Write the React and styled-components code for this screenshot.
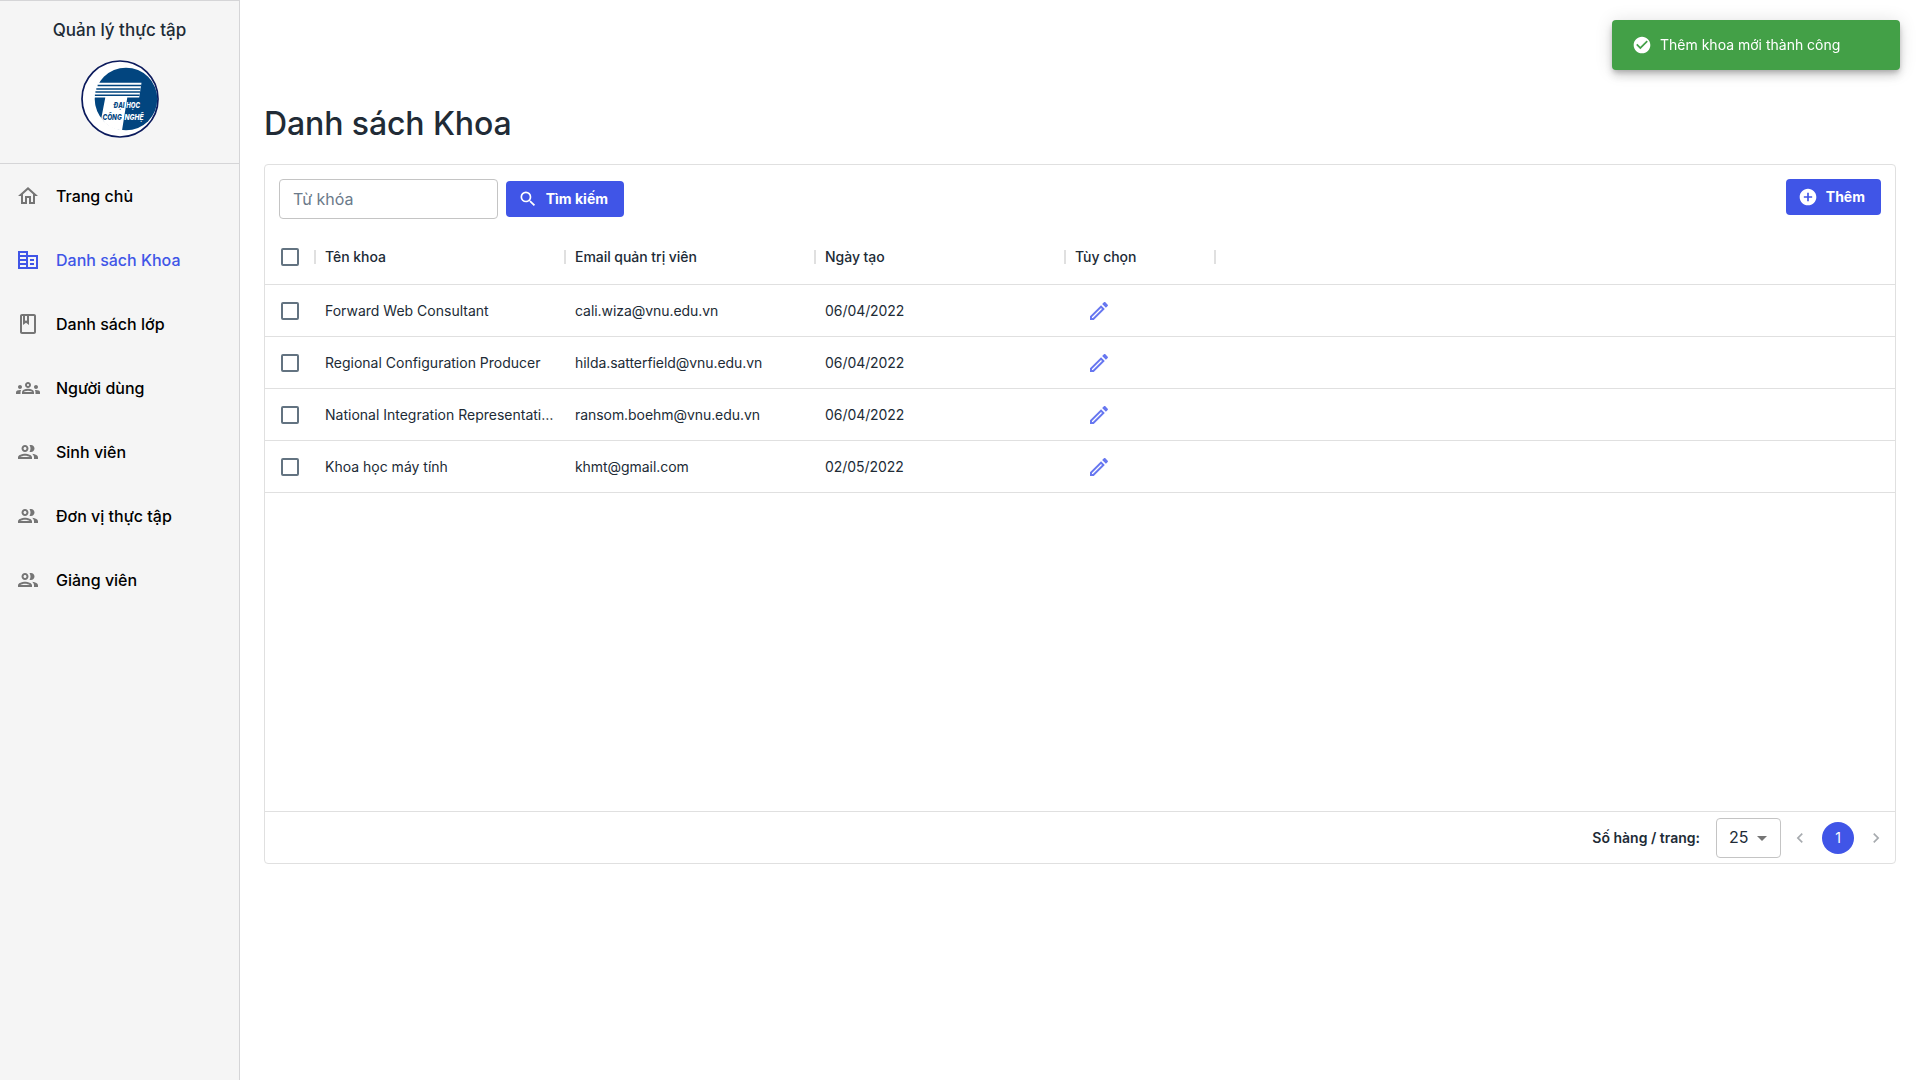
import React from "react";
import styled, { createGlobalStyle } from "styled-components";
import {
  MdOutlineHome,
  MdOutlineClass,
  MdOutlineGroups,
  MdSearch,
  MdAddCircle,
  MdArrowDropDown,
  MdNavigateBefore,
  MdNavigateNext,
  MdCheckCircle,
} from "react-icons/md";

const primary = "#4055e7";
const ink = "#212b36";
const line = "#e0e0e0";

const GlobalStyle = createGlobalStyle`
  *, *::before, *::after { box-sizing: border-box; }
  body {
    margin: 0;
    background: #fff;
    color: ${ink};
    font-family: Inter, "Noto Sans", sans-serif;
    font-size: 16px;
    line-height: 1.5;
  }
  button, input { font-family: inherit; }
`;

const Layout = styled.div`
  display: flex;
  min-height: 100vh;
`;

const Sidebar = styled.aside`
  flex: 0 0 240px;
  background: #f5f5f5;
  border-top: 1px solid #d5d5d7;
  border-right: 1px solid #d5d5d7;
`;

const Brand = styled.div`
  display: flex;
  flex-direction: column;
  align-items: center;
  height: 163px;
  padding-top: 17px;
  border-bottom: 1px solid #d5d5d7;
`;

const BrandName = styled.div`
  height: 24px;
  font-size: 17px;
  font-weight: 500;
  line-height: 24px;
`;

const Logo = styled.svg`
  display: block;
  width: 80px;
  height: 80px;
  margin-top: 17px;
`;

const Nav = styled.nav`
  display: flex;
  flex-direction: column;
`;

const NavItem = styled.a`
  display: flex;
  align-items: center;
  gap: 16px;
  height: 64px;
  padding: 0 16px;
  color: ${(p) => (p.$active ? primary : "#000")};
  font-weight: 500;

  svg {
    width: 24px;
    height: 24px;
    color: ${(p) => (p.$active ? primary : "#757575")};
  }
`;

const Main = styled.main`
  flex: 1;
  min-width: 0;
  padding: 100px 24px 0;
`;

const Title = styled.h1`
  margin: 0 0 16px;
  font-size: 32px;
  font-weight: 500;
  letter-spacing: -0.1px;
  line-height: 48px;
`;

const Card = styled.section`
  display: flex;
  flex-direction: column;
  height: 700px;
  border: 1px solid ${line};
  border-radius: 4px;
`;

const Toolbar = styled.div`
  display: flex;
  align-items: flex-start;
  justify-content: space-between;
  height: 64px;
  padding: 14px;
`;

const Search = styled.div`
  display: flex;
  align-items: center;
  gap: 8px;
`;

const Input = styled.input`
  width: 219px;
  height: 40px;
  padding: 0 13px;
  border: 1px solid #c4c4c4;
  border-radius: 4px;
  background: transparent;
  color: ${ink};
  font-size: 16px;

  &::placeholder {
    color: #6b7a8a;
    opacity: 1;
  }
`;

const Button = styled.button`
  display: flex;
  align-items: center;
  justify-content: space-between;
  width: ${(p) => p.$width}px;
  height: 36px;
  padding: 0 16px 0 12px;
  border: 0;
  border-radius: 4px;
  background: ${primary};
  color: #fff;
  font-size: 14px;
  font-weight: 700;
  white-space: nowrap;

  svg {
    width: 20px;
    height: 20px;
  }
`;

const Label = styled.span`
  padding-bottom: 2px;
`;

const Grid = styled.div`
  flex: 1;
  font-size: 14px;
`;

const Row = styled.div`
  display: grid;
  grid-template-columns: 50px 250px 250px 250px 150px;
  align-items: center;
  height: ${(p) => (p.$head ? 56 : 52)}px;
  border-bottom: 1px solid ${line};
  font-weight: ${(p) => (p.$head ? 500 : 400)};
`;

const Cell = styled.div`
  padding: 0 10px;
  overflow: hidden;
  letter-spacing: ${(p) => (p.$tight ? "-0.06px" : "normal")};
  text-overflow: ellipsis;
  white-space: nowrap;
`;

const HeadCell = styled.div`
  display: flex;
  align-items: center;
  justify-content: space-between;
  height: 24px;
  padding-left: ${(p) => (p.$check ? 16 : 10)}px;
  margin-right: -1px;
  letter-spacing: -0.04px;

  &::after {
    content: "";
    width: 2px;
    height: 14px;
    background: ${line};
  }
`;

const CheckCell = styled.div`
  padding-left: 16px;
`;

const Checkbox = styled.span`
  display: block;
  width: 18px;
  height: 18px;
  border: 2px solid #637381;
  border-radius: 2px;
`;

const EditButton = styled.a`
  display: flex;
  padding-left: 12px;
  color: #6777f0;
`;

const GlyphIcon = styled.svg`
  display: block;
  width: 24px;
  height: 24px;
  fill: currentColor;
`;

const Footer = styled.footer`
  display: flex;
  align-items: center;
  justify-content: flex-end;
  height: 52px;
  padding-right: 7px;
  border-top: 1px solid ${line};
`;

const FooterLabel = styled.span`
  margin-right: 16px;
  font-size: 14px;
  font-weight: 600;
`;

const Select = styled.div`
  display: flex;
  align-items: center;
  justify-content: space-between;
  width: 65px;
  height: 40px;
  margin-right: 7px;
  padding: 0 6px 0 12px;
  border: 1px solid #c4c4c4;
  border-radius: 4px;

  svg {
    width: 24px;
    height: 24px;
    color: #757575;
  }
`;

const PageArrow = styled.span`
  display: flex;
  align-items: center;
  justify-content: center;
  width: 24px;
  height: 32px;
  color: #a7abaf;

  svg {
    width: 20px;
    height: 20px;
  }
`;

const PageNumber = styled.span`
  display: flex;
  align-items: center;
  justify-content: center;
  width: 32px;
  height: 32px;
  margin: 0 10px;
  border-radius: 50%;
  background: ${primary};
  color: #fff;
  font-size: 14px;
`;

const Toast = styled.div`
  position: fixed;
  top: 20px;
  right: 20px;
  display: flex;
  align-items: center;
  gap: 8px;
  width: 288px;
  height: 50px;
  padding: 0 20px;
  border-radius: 4px;
  background: #43a047;
  color: #fff;
  font-size: 14px;
  box-shadow: 0 3px 5px -1px rgba(0, 0, 0, 0.2), 0 6px 10px 0 rgba(0, 0, 0, 0.14),
    0 1px 18px 0 rgba(0, 0, 0, 0.12);

  svg {
    width: 20px;
    height: 20px;
  }
`;

function OfficeIcon() {
  return (
    <GlyphIcon viewBox="0 0 24 24">
      <path d="M12 7V3H2v18h20V7H12zm-2 12H4v-2h6v2zm0-4H4v-2h6v2zm0-4H4V9h6v2zm0-4H4V5h6v2zm10 12h-8V9h8v10zm-2-8h-4v2h4v-2zm0 4h-4v2h4v-2z" />
    </GlyphIcon>
  );
}

function PeopleIcon() {
  return (
    <GlyphIcon viewBox="0 0 24 24">
      <path d="M9 13.75c-2.34 0-7 1.17-7 3.5V19h14v-1.75c0-2.33-4.66-3.5-7-3.5zM4.34 17c.84-.58 2.87-1.25 4.66-1.25s3.82.67 4.66 1.25H4.34zM9 12c1.93 0 3.5-1.57 3.5-3.5S10.93 5 9 5 5.5 6.57 5.5 8.5 7.07 12 9 12zm0-5c.83 0 1.5.67 1.5 1.5S9.83 10 9 10s-1.5-.67-1.5-1.5S8.17 7 9 7zm7.04 6.81c1.16.84 1.96 1.96 1.96 3.44V19h4v-1.75c0-2.02-3.5-3.17-5.96-3.44zM15 12c1.93 0 3.5-1.57 3.5-3.5S16.93 5 15 5c-.54 0-1.04.13-1.5.35.63.89 1 1.98 1 3.15s-.37 2.26-1 3.15c.46.22.96.35 1.5.35z" />
    </GlyphIcon>
  );
}

function PencilIcon() {
  return (
    <GlyphIcon viewBox="0 0 24 24">
      <path d="M14.06 9.02l.92.92L5.92 19H5v-.92l9.06-9.06M17.66 3c-.25 0-.51.1-.7.29l-1.83 1.83 3.75 3.75 1.83-1.83c.39-.39.39-1.02 0-1.41l-2.34-2.34c-.2-.2-.45-.29-.71-.29zm-3.6 3.19L3 17.25V21h3.75L17.81 9.94l-3.75-3.75z" />
    </GlyphIcon>
  );
}

const LogoText = styled.text`
  font-family: Inter, sans-serif;
  font-weight: 800;
  font-style: italic;
`;

function UniversityLogo() {
  const navy = "#02457f";
  return (
    <Logo viewBox="0 0 80 80">
      <circle cx="40" cy="40" r="38" fill="#fff" stroke="#0b1a5c" strokeWidth="1.7" />
      <circle cx="46" cy="40" r="31.3" fill={navy} />
      <path d="M17 23.8H61.5L59.2 38.6H47.3L42 71.6Q28 70 21.3 59.3L25.3 38.6H13Z" fill="#fff" />
      <path
        d="M17.6 26.5H61M16.3 29.9H60.5M15.4 33.1H60M14.9 36.3H59.5"
        stroke={navy}
        strokeWidth="1.5"
      />
      <LogoText x="33.5" y="49.3" fontSize="7.8" textLength="11" lengthAdjust="spacingAndGlyphs" fill={navy}>
        ĐẠI
      </LogoText>
      <LogoText x="46.3" y="49.3" fontSize="7.8" textLength="13.6" lengthAdjust="spacingAndGlyphs" fill="#fff">
        HỌC
      </LogoText>
      <LogoText x="22.5" y="61" fontSize="8" textLength="19.2" lengthAdjust="spacingAndGlyphs" fill={navy}>
        CÔNG
      </LogoText>
      <LogoText x="44.4" y="61" fontSize="8" textLength="19.2" lengthAdjust="spacingAndGlyphs" fill="#fff">
        NGHỆ
      </LogoText>
    </Logo>
  );
}

const navItems = [
  { label: "Trang chủ", Icon: MdOutlineHome },
  { label: "Danh sách Khoa", Icon: OfficeIcon, active: true },
  { label: "Danh sách lớp", Icon: MdOutlineClass },
  { label: "Người dùng", Icon: MdOutlineGroups },
  { label: "Sinh viên", Icon: PeopleIcon },
  { label: "Đơn vị thực tập", Icon: PeopleIcon },
  { label: "Giảng viên", Icon: PeopleIcon },
];

const columns = ["Tên khoa", "Email quản trị viên", "Ngày tạo", "Tùy chọn"];

const faculties = [
  { name: "Forward Web Consultant", email: "cali.wiza@vnu.edu.vn", created: "06/04/2022" },
  { name: "Regional Configuration Producer", email: "hilda.satterfield@vnu.edu.vn", created: "06/04/2022" },
  { name: "National Integration Representative", email: "ransom.boehm@vnu.edu.vn", created: "06/04/2022" },
  { name: "Khoa học máy tính", email: "khmt@gmail.com", created: "02/05/2022" },
];

export default function App() {
  return (
    <>
      <GlobalStyle />
      <Layout>
        <Sidebar>
          <Brand>
            <BrandName>Quản lý thực tập</BrandName>
            <UniversityLogo />
          </Brand>
          <Nav>
            {navItems.map(({ label, Icon, active }) => (
              <NavItem key={label} $active={active}>
                <Icon />
                {label}
              </NavItem>
            ))}
          </Nav>
        </Sidebar>
        <Main>
          <Title>Danh sách Khoa</Title>
          <Card>
            <Toolbar>
              <Search>
                <Input placeholder="Từ khóa" />
                <Button $width={118}>
                  <MdSearch />
                  <Label>Tìm kiếm</Label>
                </Button>
              </Search>
              <Button $width={95}>
                <MdAddCircle />
                <Label>Thêm</Label>
              </Button>
            </Toolbar>
            <Grid>
              <Row $head>
                <HeadCell $check>
                  <Checkbox />
                </HeadCell>
                {columns.map((c) => (
                  <HeadCell key={c}>{c}</HeadCell>
                ))}
              </Row>
              {faculties.map((f) => (
                <Row key={f.email}>
                  <CheckCell>
                    <Checkbox />
                  </CheckCell>
                  <Cell>{f.name}</Cell>
                  <Cell $tight>{f.email}</Cell>
                  <Cell $tight>{f.created}</Cell>
                  <Cell>
                    <EditButton>
                      <PencilIcon />
                    </EditButton>
                  </Cell>
                </Row>
              ))}
            </Grid>
            <Footer>
              <FooterLabel>Số hàng / trang:</FooterLabel>
              <Select>
                <Label>25</Label>
                <MdArrowDropDown />
              </Select>
              <PageArrow>
                <MdNavigateBefore />
              </PageArrow>
              <PageNumber>1</PageNumber>
              <PageArrow>
                <MdNavigateNext />
              </PageArrow>
            </Footer>
          </Card>
        </Main>
      </Layout>
      <Toast>
        <MdCheckCircle />
        <Label>Thêm khoa mới thành công</Label>
      </Toast>
    </>
  );
}
